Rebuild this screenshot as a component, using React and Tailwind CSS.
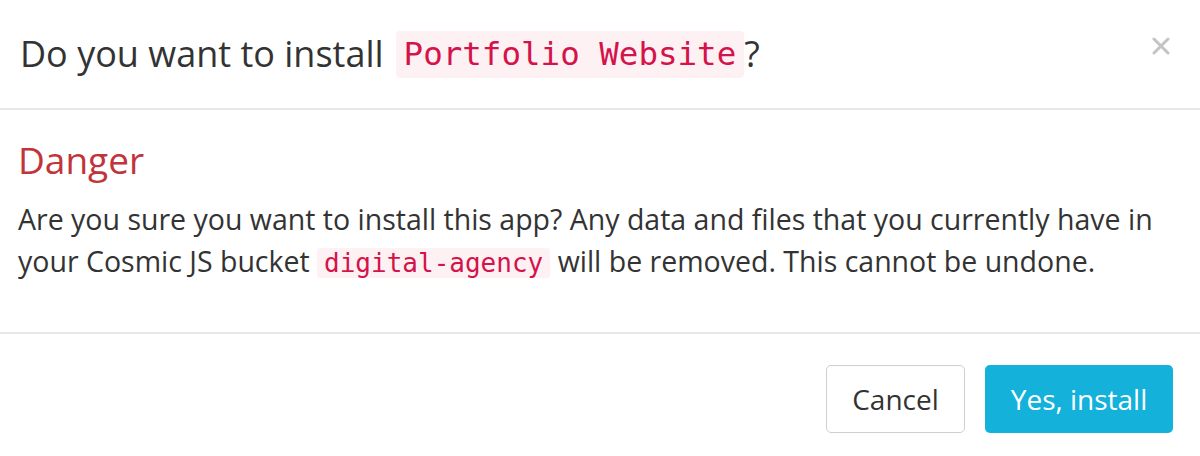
export default function App() {
  const sans = { fontFamily: '"Open Sans", "Noto Sans", sans-serif' };
  return (
    <div className="w-[1200px] h-[456px] bg-white flex flex-col text-[#333]" style={sans}>
      <div className="h-[110px] flex items-center justify-between pl-[20px] pr-[30px] border-b-2 border-[#e8e8e8] shrink-0">
        <div className="text-[36px] leading-none flex items-center">
          <span>Do you want to install</span>
          <code
            className="ml-[12px] px-[8px] py-[6px] bg-[#fdf1f4] text-[#d4134a] rounded-[4px] text-[32.5px] leading-[35px]"
            style={{ fontFamily: '"DejaVu Sans Mono", monospace' }}
          >
            Portfolio Website
          </code>
          <span>?</span>
        </div>
        <svg width="18" height="18" viewBox="0 0 18 18" className="mb-[16px]">
          <path d="M2 2 L16 16 M16 2 L2 16" stroke="#c4c4c4" strokeWidth="3" strokeLinecap="round" />
        </svg>
      </div>
      <div className="h-[224px] shrink-0 border-b-2 border-[#e8e8e8] px-[18px] pt-[26px]">
        <div className="text-[37px] leading-[48px] text-[#c1343a]">Danger</div>
        <p className="mt-[14px] text-[28.5px] leading-[42px] text-[#333]">
          Are you sure you want to install this app? Any data and files that you currently have in your Cosmic JS bucket{' '}
          <code
            className="px-[7px] py-0 bg-[#fdf1f4] text-[#d4134a] rounded-[3px] text-[26px]"
            style={{ fontFamily: '"DejaVu Sans Mono", monospace' }}
          >
            digital-agency
          </code>{' '}
          will be removed. This cannot be undone.
        </p>
      </div>
      <div className="flex-1 flex items-center justify-end gap-[20px] pr-[27px] pt-[8px]">
        <button className="w-[139px] h-[68px] rounded-[5px] border border-[#cfcfcf] bg-white text-[28px] text-[#333]">
          Cancel
        </button>
        <button className="w-[188px] h-[68px] rounded-[5px] bg-[#14b1db] text-[28px] text-white">
          Yes, install
        </button>
      </div>
    </div>
  );
}
